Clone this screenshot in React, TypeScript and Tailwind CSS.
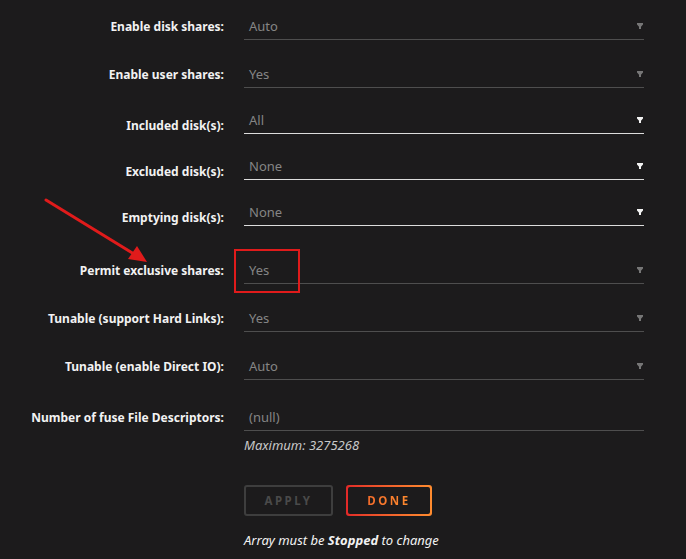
import React from 'react';

type Row = {
  label: string;
  value: string;
  gap: string; // top margin before the field
  active?: boolean; // editable multi-select rows
  select?: boolean;
};

const rows: Row[] = [
  { label: 'Enable disk shares:', value: 'Auto', gap: 'mt-[13px]', select: true },
  { label: 'Enable user shares:', value: 'Yes', gap: 'mt-[21px]', select: true },
  { label: 'Included disk(s):', value: 'All', gap: 'mt-[19px]', active: true, select: true },
  { label: 'Excluded disk(s):', value: 'None', gap: 'mt-[19px]', active: true, select: true },
  { label: 'Emptying disk(s):', value: 'None', gap: 'mt-[19px]', active: true, select: true },
  { label: 'Permit exclusive shares:', value: 'Yes', gap: 'mt-[31px]', select: true },
  { label: 'Tunable (support Hard Links):', value: 'Yes', gap: 'mt-[21px]', select: true },
  { label: 'Tunable (enable Direct IO):', value: 'Auto', gap: 'mt-[21px]', select: true },
  { label: 'Number of fuse File Descriptors:', value: '(null)', gap: 'mt-[24px]' },
];

const Caret = ({ active }: { active?: boolean }) => (
  <svg width="6" height="6" viewBox="0 0 6 6" className="mr-[1px]">
    <polygon points="0,0 6,0 6,1.5 4,3.8 4,6 2,6 2,3.8 0,1.5" fill={active ? '#f2f2f2' : '#767676'} />
  </svg>
);

const App = () => {
  return (
    <div
      className="relative min-h-[559px] w-[686px] overflow-hidden bg-[#1c1b1c] pb-[10px]"
      style={{ fontFamily: '"Noto Sans", "Open Sans", sans-serif' }}
    >
      {rows.map((row) => (
        <div
          key={row.label}
          className={`flex ${row.active ? 'items-end' : 'items-center'} ${row.gap}`}
        >
          <label
            className={`w-[224px] text-right text-[12px] font-bold leading-[14px] text-[#f2f2f2] ${
              row.active ? 'mb-[1px]' : ''
            }`}
          >
            {row.label}
          </label>
          <div
            className={`ml-[20px] flex h-[27px] w-[400px] items-center justify-between border-b pl-[5px] ${
              row.active ? 'border-[#dcdcdc]' : 'border-[#4e4e4e]'
            }`}
          >
            <span className="text-[13px] leading-[14px] text-[#858585]">{row.value}</span>
            {row.select && <Caret active={row.active} />}
          </div>
        </div>
      ))}

      <div className="ml-[244px] mt-[7px] text-[13px] italic leading-[14px] text-[#c8c8c8]">
        Maximum: 3275268
      </div>

      <div className="ml-[244px] mt-[33px] flex gap-[13px]">
        <button
          type="button"
          className="flex h-[31px] w-[89px] items-center justify-center rounded-[3px] border-2 border-[#3e3e3e] text-[11.5px] font-bold tracking-[2.5px] text-[#4a4a4a]"
        >
          APPLY
        </button>
        <div className="rounded-[3px] bg-gradient-to-r from-[#e22828] to-[#ff8c2f] p-[2px]">
          <div className="flex h-[27px] w-[82px] items-center justify-center rounded-[2px] bg-[#1c1b1c]">
            <span className="bg-gradient-to-r from-[#f26b2a] to-[#ff8c2f] bg-clip-text text-[11.5px] font-bold tracking-[2.5px] text-transparent">
              DONE
            </span>
          </div>
        </div>
      </div>

      <div className="ml-[244px] mt-[17px] text-[13px] italic leading-[14px] text-[#f2f2f2]">
        Array must be <span className="font-bold">Stopped</span> to change
      </div>

      {/* annotation: red box and arrow */}
      <div className="absolute left-[234px] top-[249px] h-[44px] w-[66px] border-2 border-[#e01b1b]" />
      <svg className="absolute left-0 top-0" width="686" height="559" viewBox="0 0 686 559" fill="none">
        <line x1="46" y1="200" x2="134" y2="254" stroke="#e01b1b" strokeWidth="3" strokeLinecap="round" />
        <polygon points="147,262 128,259 137,246" fill="#e01b1b" />
      </svg>
    </div>
  );
};

export default App;
